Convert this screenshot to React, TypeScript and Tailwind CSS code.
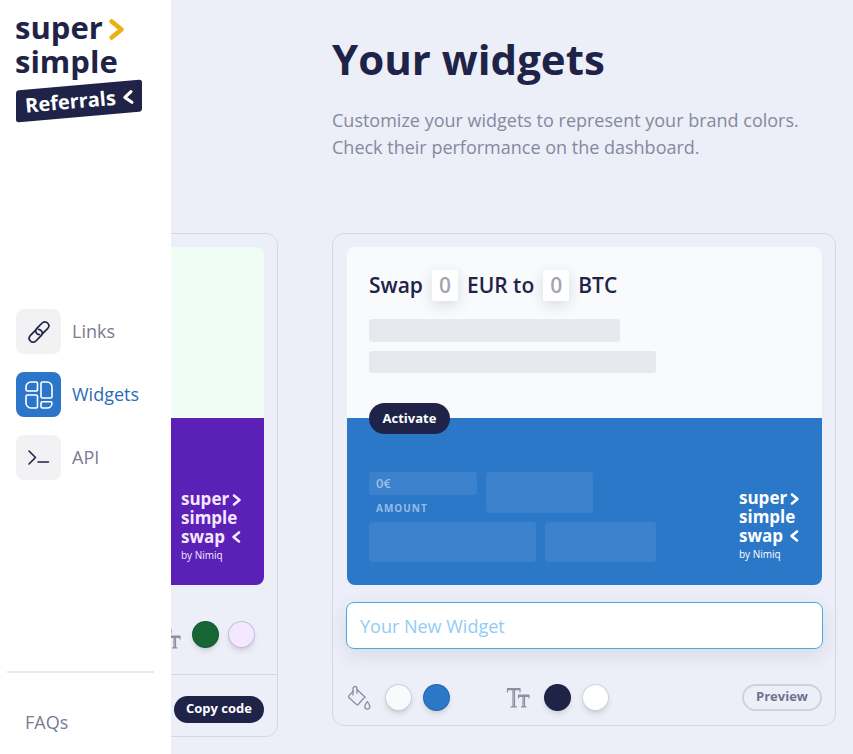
import type { ReactNode } from "react";

function Chevron({ flip = false, className = "" }: { flip?: boolean; className?: string }) {
  return (
    <svg viewBox="0 0 10 14" fill="none" stroke="currentColor" strokeWidth="2.6" strokeLinecap="round" strokeLinejoin="round" className={className} aria-hidden="true">
      <path d={flip ? "M8 2.5 2.5 7 8 11.5" : "M2 2.5 7.5 7 2 11.5"} />
    </svg>
  );
}

function LinkIcon() {
  return (
    <svg viewBox="0 0 24 24" width="24" height="24" fill="none" stroke="currentColor" strokeWidth="1.7" strokeLinecap="round" strokeLinejoin="round" aria-hidden="true">
      <path d="M12.6 14.600a3.700 3.700 0 0 1-3-6l5.500-5.600a3.700 3.700 0 0 1 5.500 0 3.900 3.900 0 0 1 .2 5.300l-5 5.100" />
      <path d="M11.400 9.400a3.700 3.700 0 0 1 3 6l-5.500 5.600a3.700 3.700 0 0 1-5.500 0 3.900 3.900 0 0 1-.2-5.300l5-5.100" />
    </svg>
  );
}

function WidgetsIcon() {
  return (
    <svg viewBox="0 0 28 28" width="28" height="28" fill="none" stroke="currentColor" strokeWidth="1.6" strokeLinejoin="round" aria-hidden="true">
      <path d="M6 1h5a1.500 1.500 0 0 1 1.500 1.500v6A1.500 1.500 0 0 1 11 10H2.500A1.500 1.500 0 0 1 1 8.500V6a5 5 0 0 1 5-5Z" />
      <path d="M2.500 14H11a1.500 1.500 0 0 1 1.500 1.500v10A1.500 1.500 0 0 1 11 27H6a5 5 0 0 1-5-5v-6.500A1.500 1.500 0 0 1 2.500 14Z" />
      <path d="M17.500 1H22a5 5 0 0 1 5 5v9.500a1.500 1.500 0 0 1-1.500 1.500h-8a1.500 1.500 0 0 1-1.500-1.500v-13A1.500 1.500 0 0 1 17.500 1Z" />
      <path d="M17.500 20.800h8A1.500 1.500 0 0 1 27 22.300c0 2.700-2.200 4.700-5 4.700h-4.500a1.500 1.500 0 0 1-1.500-1.500v-3.200a1.500 1.500 0 0 1 1.500-1.500Z" />
    </svg>
  );
}

function TerminalIcon() {
  return (
    <svg viewBox="0 0 24 24" width="24" height="24" fill="none" stroke="currentColor" strokeWidth="1.6" strokeLinecap="round" strokeLinejoin="round" aria-hidden="true">
      <path d="m2 5 6.500 6.500L2 18M11 16h10.500" />
    </svg>
  );
}

function BucketIcon() {
  return (
    <svg viewBox="0 0 24 26" width="24" height="26" fill="none" stroke="currentColor" strokeWidth="1.3" strokeLinecap="round" strokeLinejoin="round" className="text-[#8c8ea1]" aria-hidden="true">
      <path d="m10 4.500 8.200 7.700-1.800 1.300-5.200 6a1.200 1.200 0 0 1-1.700.1l-7.600-7a1.200 1.200 0 0 1-.1-1.700L6 6.200" />
      <path d="M6 10V3.500a2 2 0 0 1 4 0v4.800" />
      <path d="M20.300 16.500c1.300 2 2.500 3.500 2.500 5.100a2.500 2.500 0 0 1-5 0c0-1.600 1.200-3.100 2.500-5.100Z" />
    </svg>
  );
}

function TextIcon() {
  return (
    <svg viewBox="0 0 24 22" width="24" height="22" fill="none" stroke="currentColor" strokeWidth="1.2" strokeLinecap="round" strokeLinejoin="round" className="text-[#8c8ea1]" aria-hidden="true">
      <path d="M1.500 5V1.500h12.500V5M1.500 2.700h12.500M7 2.700v16.500M8.500 2.700v16.500M5 19.800h5.500" />
      <path d="M12.500 11V8.200h10.500V11M12.500 9.300h10.500M17 9.300v10M18.500 9.300v10M15.500 19.800h4.500" />
    </svg>
  );
}

function NavItem({ icon, label, active = false }: { icon: ReactNode; label: string; active?: boolean }) {
  return (
    <a href="#" className="flex items-center gap-[11px]">
      <span className={active ? "flex size-[45px] items-center justify-center rounded-lg bg-[#2b76c9] text-white" : "flex size-[45px] items-center justify-center rounded-lg bg-[#f2f2f5] text-[#1f2348]"}>
        {icon}
      </span>
      <span className={active ? "text-[18px] font-medium text-[#2b6cb8]" : "text-[18px] text-[#797b91]"}>{label}</span>
    </a>
  );
}

function Sidebar() {
  return (
    <aside className="z-10 flex w-[171px] shrink-0 flex-col bg-white">
      <a href="#" className="mt-[10px] ml-[15px] block text-[31px] leading-[34px] font-bold text-[#1f2348]">
        <span className="flex items-center gap-[5px]">
          super
          <Chevron className="mt-1 h-[25px] w-[18px] text-[#e9b213]" />
        </span>
        <span className="block">simple</span>
        <span className="relative mt-[7px] ml-px flex h-8 w-[126px] items-center text-white">
          <span className="absolute inset-0 -skew-y-5 rounded-[3px] bg-[#1f2348]" />
          <span className="relative flex w-full -rotate-5 items-center justify-between pr-2 pl-[9px] text-[20px]">
            Referrals
            <Chevron flip className="h-[17px] w-3" />
          </span>
        </span>
      </a>
      <nav className="mt-[192px] ml-4 flex flex-col gap-[18px]">
        <NavItem icon={<LinkIcon />} label="Links" />
        <NavItem icon={<WidgetsIcon />} label="Widgets" active />
        <NavItem icon={<TerminalIcon />} label="API" />
      </nav>
      <div className="mt-auto mr-[17px] ml-[7px] border-t-2 border-[#e9e9ed] pt-9 pb-[18px] pl-[18px]">
        <a href="#" className="text-[18px] leading-[27px] text-[#797b91]">FAQs</a>
      </div>
    </aside>
  );
}

function SwapLogo() {
  return (
    <div className="w-[61px] text-[17px] leading-[19px] font-bold">
      <div className="flex items-center justify-between">
        super
        <Chevron className="mt-[2px] h-[14px] w-[10px]" />
      </div>
      <div>simple</div>
      <div className="flex items-center justify-between">
        swap
        <Chevron flip className="mr-px h-[14px] w-[10px]" />
      </div>
      <div className="pt-[2px] text-[10px] leading-[15px] font-normal">by Nimiq</div>
    </div>
  );
}

function Swatch({ label, className }: { label: string; className: string }) {
  return <button type="button" aria-label={label} className={`size-[27px] shrink-0 rounded-full border border-[#1f2348]/20 shadow-md ${className}`} />;
}

function AmountBox() {
  return <span className="flex h-[31px] w-[26px] items-center justify-center rounded-xs bg-white text-[#a3a5b4] shadow-[0_4px_14px_rgba(31,35,72,0.14)]">0</span>;
}

function NewWidgetCard() {
  return (
    <article className="w-[calc(100%-161px)] shrink-0 self-start rounded-xl border border-[#d5d8e4] pt-[13px] pr-[13px] pb-[14px] pl-[14px]">
      <div className="overflow-hidden rounded-lg">
        <div className="h-[171px] bg-[#f9fafc] px-[22px] pt-[23px]">
          <div className="flex items-center gap-[9px] text-[21px] leading-[31px] font-semibold text-[#1f2348]">
            Swap <AmountBox /> EUR to <AmountBox /> BTC
          </div>
          <div className="mt-[18px] h-[23px] w-[251px] rounded-[3px] bg-[#e8e9ee]" />
          <div className="mt-[9px] h-[22px] w-[287px] rounded-[3px] bg-[#e8e9ee]" />
        </div>
        <div className="flex h-[167px] flex-col bg-[#2b77c8] px-[22px]">
          <button type="button" className="relative -mt-[15px] h-[31px] w-[81px] shrink-0 rounded-full bg-[#1f2348] text-[13px] font-bold text-white">
            Activate
          </button>
          <div className="mt-[38px] flex items-end justify-between text-white">
            <div className="flex w-[287px] flex-col gap-[9px]">
              <div className="flex gap-[9px]">
                <div className="w-[108px]">
                  <div className="h-[23px] rounded-[3px] bg-white/8 pl-[7px] text-[13px] leading-[23px] font-semibold text-white/50">0€</div>
                  <div className="mt-2 pl-[7px] text-[10px] leading-[10px] font-bold tracking-widest text-white/50">AMOUNT</div>
                </div>
                <div className="h-[41px] w-[107px] rounded-[3px] bg-white/8" />
              </div>
              <div className="flex h-10 gap-[9px]">
                <div className="w-[167px] rounded-[3px] bg-white/8" />
                <div className="flex-1 rounded-[3px] bg-white/8" />
              </div>
            </div>
            <SwapLogo />
          </div>
        </div>
      </div>
      <div className="-mx-px mt-[17px]">
        <input
          type="text"
          aria-label="Widget name"
          placeholder="Your New Widget"
          className="block h-[47px] w-full rounded-lg border border-[#4ba8e3] bg-white px-[13px] text-[18px] text-[#1f2348] shadow-[0_6px_20px_rgba(31,35,72,0.1)] outline-none placeholder:text-[#90cdf4]"
        />
      </div>
      <div className="mt-[35px] flex h-[27px] items-center">
        <BucketIcon />
        <div className="ml-[14px] flex gap-[11px]">
          <Swatch label="Background" className="bg-[#f9fafc]" />
          <Swatch label="Panel" className="bg-[#2b77c8]" />
        </div>
        <div className="ml-[56px] flex items-center gap-[14px]">
          <TextIcon />
          <div className="flex gap-[11px]">
            <Swatch label="Heading text" className="bg-[#1f2348]" />
            <Swatch label="Panel text" className="bg-white" />
          </div>
        </div>
        <button type="button" className="ml-auto flex h-[27px] w-20 justify-center rounded-full border-2 border-[#cfd1dc] text-[13px] leading-[21px] font-bold text-[#6f7290]">
          Preview
        </button>
      </div>
    </article>
  );
}

function SavedWidgetCard() {
  return (
    <article className="w-[calc(100%-161px)] shrink-0 self-start rounded-xl border border-[#d5d8e4]">
      <div className="px-[13px] pt-[13px]">
        <div className="overflow-hidden rounded-lg">
          <div className="h-[171px] bg-[#f0fdf4]" />
          <div className="flex h-[167px] items-end justify-end bg-[#5b21b6] px-[22px] pb-[22px] text-[#f3e8ff]">
            <SwapLogo />
          </div>
        </div>
        <div className="mt-9 flex h-[27px] items-center justify-end gap-[9px] pr-[9px]">
          <div className="mt-2 mr-[2px]">
            <TextIcon />
          </div>
          <Swatch label="Heading text" className="bg-[#166534]" />
          <Swatch label="Panel text" className="bg-[#f3e8ff]" />
        </div>
      </div>
      <div className="mt-[26px] flex justify-end border-t border-[#d5d8e4] px-[13px] pt-[21px] pb-[13px]">
        <button type="button" className="flex h-[27px] w-[90px] justify-center rounded-full bg-[#1f2348] text-[13px] leading-[25px] font-bold text-white">
          Copy code
        </button>
      </div>
    </article>
  );
}

export default function App() {
  return (
    <div className="flex min-h-screen bg-[#eceff7] font-['Open_Sans','Noto_Sans',sans-serif]">
      <Sidebar />
      <main className="min-w-0 flex-1 overflow-hidden">
        <header className="pt-8 pr-4 pl-[161px]">
          <h1 className="text-[42px] leading-[54px] font-bold text-[#1f2348]">Your widgets</h1>
          <p className="mt-[21px] text-[18px] leading-[27px] text-[#8688a0]">
            Customize your widgets to represent your brand colors.
            <br />
            Check their performance on the dashboard.
          </p>
        </header>
        <section className="mt-[72px] flex justify-end gap-[54px] pr-[17px]">
          <SavedWidgetCard />
          <NewWidgetCard />
        </section>
      </main>
    </div>
  );
}
